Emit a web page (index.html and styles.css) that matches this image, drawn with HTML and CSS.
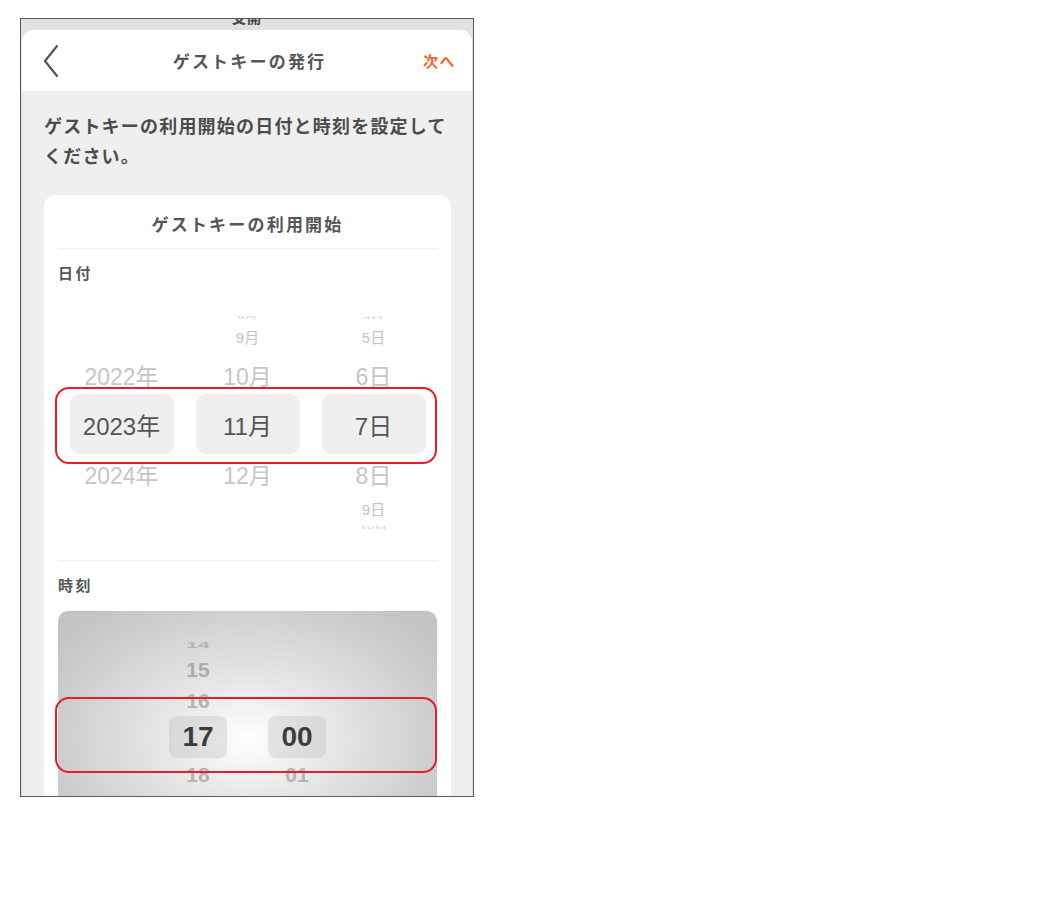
FILE: index.html
```html
<!DOCTYPE html>
<html lang="ja">
<head>
    <meta charset="UTF-8">
    <meta name="viewport" content="width=device-width, initial-scale=1.0">
    <title>ゲストキーの発行</title>
    <link rel="stylesheet" href="styles.css">
</head>
<body>
    <div class="shot">
        <!-- oberer Rand (abgeschnitten) -->
        <div class="topbar"><span class="topbar-text">支開</span></div>

        <div class="sheet">
            <div class="header">
                <svg class="back" width="16" height="32" viewBox="0 0 16 32">
                    <path d="M14 1 L2 16 L14 31" fill="none" stroke="#555" stroke-width="2.2" stroke-linecap="round" stroke-linejoin="round"/>
                </svg>
                <div class="title">ゲストキーの発行</div>
                <div class="next">次へ</div>
            </div>

            <p class="desc">ゲストキーの利用開始の日付と時刻を設定して<br>ください。</p>

            <div class="card">
                <div class="card-title">ゲストキーの利用開始</div>

                <div class="label">日付</div>
                <div class="date-picker">
                    <div class="wheel">
                        <span class="row xs"></span>
                        <span class="row sm"></span>
                        <span class="row md">2022年</span>
                        <span class="row sel">2023年</span>
                        <span class="row md">2024年</span>
                        <span class="row sm"></span>
                        <span class="row xs"></span>
                    </div>
                    <div class="wheel">
                        <span class="row xs"><i>8月</i></span>
                        <span class="row sm">9月</span>
                        <span class="row md">10月</span>
                        <span class="row sel">11月</span>
                        <span class="row md">12月</span>
                        <span class="row sm"></span>
                        <span class="row xs"></span>
                    </div>
                    <div class="wheel">
                        <span class="row xs"><i>4日</i></span>
                        <span class="row sm">5日</span>
                        <span class="row md">6日</span>
                        <span class="row sel">7日</span>
                        <span class="row md">8日</span>
                        <span class="row sm">9日</span>
                        <span class="row xs"><i>10日</i></span>
                    </div>
                    <div class="mark mark-date"></div>
                </div>

                <div class="label label-time">時刻</div>
                <div class="time-picker">
                    <div class="time-cols">
                        <div class="twheel">
                            <span class="trow xs"><i>14</i></span>
                            <span class="trow sm">15</span>
                            <span class="trow md">16</span>
                            <span class="trow sel">17</span>
                            <span class="trow md">18</span>
                        </div>
                        <div class="twheel">
                            <span class="trow xs"></span>
                            <span class="trow sm"></span>
                            <span class="trow md"></span>
                            <span class="trow sel">00</span>
                            <span class="trow md">01</span>
                        </div>
                    </div>
                    <div class="mark mark-time"></div>
                </div>
            </div>
        </div>
    </div>
</body>
</html>
```

FILE: styles.css
```css
body {
    margin: 0;
    padding: 0;
    background: #fff;
    font-family: "Liberation Sans", "Noto Sans CJK JP", sans-serif;
}
.shot {
    margin: 18px 0 0 20px;
    width: 452px;
    height: 777px;
    border: 1px solid #5b5b5b;
    overflow: hidden;
    background: #e2e2e2;
}
.topbar {
    height: 11px;
    overflow: hidden;
    text-align: center;
}
.topbar-text {
    display: block;
    font-family: "Noto Sans CJK JP", sans-serif;
    font-weight: 700;
    font-size: 14px;
    line-height: 16px;
    color: #444;
    letter-spacing: 1px;
    transform: translateY(-10px);
}
.sheet {
    background: #efefef;
    border-radius: 12px 12px 0 0;
    height: 800px;
    overflow: hidden;
    margin: 0 1px;
}
.header {
    height: 61px;
    background: #fff;
    display: grid;
    grid-template-columns: 1fr auto 1fr;
    align-items: center;
    padding: 0 16px 0 21px;
}
.back {
    display: block;
    margin-top: 1px;
}
.title {
    font-family: "Noto Sans CJK JP", sans-serif;
    font-weight: 700;
    font-size: 17px;
    letter-spacing: 2.2px;
    color: #555;
}
.next {
    justify-self: end;
    font-family: "Noto Sans CJK JP", sans-serif;
    font-weight: 700;
    font-size: 15px;
    letter-spacing: 1.5px;
    color: #f0662e;
}
.desc {
    margin: 0;
    padding: 19px 20px 0 22px;
    font-family: "Noto Sans CJK JP", sans-serif;
    font-weight: 700;
    font-size: 18px;
    line-height: 30px;
    letter-spacing: 1.2px;
    color: #4c4c4c;
}
.card {
    margin: 25px 21px 0 22px;
    background: #fff;
    border-radius: 12px;
    padding: 0 14px;
    height: 700px;
}
.card-title {
    padding: 17px 0 12px;
    line-height: 24px;
    text-align: center;
    font-family: "Noto Sans CJK JP", sans-serif;
    font-weight: 700;
    font-size: 17px;
    letter-spacing: 2.2px;
    color: #555;
    border-bottom: 1px solid #eeeeee;
}
.label {
    padding-top: 13px;
    line-height: 22px;
    font-family: "Noto Sans CJK JP", sans-serif;
    font-weight: 700;
    font-size: 15px;
    letter-spacing: 2.5px;
    color: #555;
}
.label-time {
    margin-top: 24px;
    border-top: 1px solid #eeeeee;
}

/* Datum-Rad */
.date-picker {
    position: relative;
    margin-top: 24px;
    display: flex;
    justify-content: center;
    gap: 22px;
}
.wheel {
    width: 104px;
    display: flex;
    flex-direction: column;
}
.row {
    display: flex;
    align-items: center;
    justify-content: center;
    color: #c6c6c6;
    font-size: 23px;
}
.row.xs {
    height: 18px;
    font-size: 13px;
    color: #d4d4d4;
}
.row.xs i {
    font-style: normal;
    transform: scaleY(0.3);
}
.row.sm {
    height: 20px;
    font-size: 15px;
    color: #c4c4c4;
}
.row.md {
    height: 39px;
}
.row.sm + .row.md {
    margin-top: 9px;
}
.row.md + .row.sm {
    margin-top: 5px;
}
.row.sel {
    height: 60px;
    background: #efefef;
    border-radius: 9px;
    color: #555;
    font-size: 24px;
}

/* Markierungen */
.mark {
    position: absolute;
    left: -3px;
    width: 382px;
    box-sizing: border-box;
    border: 2px solid #ec1c24;
    border-radius: 14px;
}
.mark-date {
    top: 79px;
    height: 77px;
}
.mark-time {
    top: 86px;
    height: 76px;
}

/* Uhrzeit-Rad */
.time-picker {
    position: relative;
    margin-top: 15px;
    height: 220px;
    border-radius: 10px;
    background: radial-gradient(ellipse 62% 75% at 50% 58%, #ffffff 0%, #e6e7e7 35%, #d2d3d4 70%, #c2c3c5 100%);
}
.time-cols {
    display: flex;
    justify-content: center;
    gap: 41px;
    padding-top: 25px;
}
.twheel {
    width: 58px;
    display: flex;
    flex-direction: column;
}
.trow {
    display: flex;
    align-items: center;
    justify-content: center;
    font-weight: 700;
    font-size: 21px;
    color: #acacac;
}
.trow.xs {
    height: 18px;
}
.trow.xs i {
    font-style: normal;
    transform: scaleY(0.45);
    color: #b3b3b3;
}
.trow.sm {
    height: 20px;
    margin-top: 6px;
}
.trow.md {
    height: 22px;
    margin-top: 10px;
    color: #b4b4b4;
}
.trow.sel {
    height: 42px;
    margin-top: 4px;
    background: rgba(190, 190, 190, 0.35);
    border-radius: 8px;
    font-size: 28px;
    color: #3c3c3c;
}
.trow.sel + .trow.md {
    margin-top: 6px;
}
```
